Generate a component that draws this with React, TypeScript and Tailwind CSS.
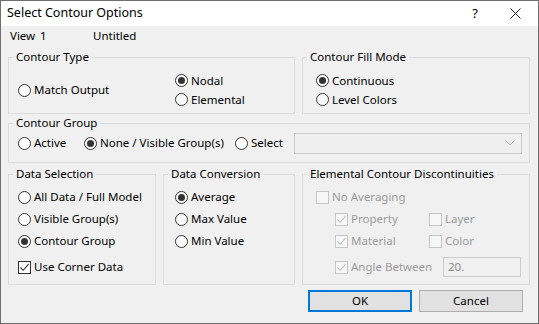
import React from 'react';

const font = { fontFamily: '"Segoe UI", "Noto Sans", "Open Sans", sans-serif' };

function Radio({ label, checked = false, tight = false, className = '' }: { label: string; checked?: boolean; tight?: boolean; className?: string }) {
    return (
        <div className={`flex items-center gap-[3px] ${tight ? 'h-[19px]' : 'h-[22px]'} ${className}`}>
            <div className="h-[13px] w-[13px] rounded-full border border-[#333333] bg-white flex items-center justify-center shrink-0">
                {checked && <div className="h-[7px] w-[7px] rounded-full bg-[#333333]" />}
            </div>
            <span className="text-[11.5px] leading-4 text-black whitespace-nowrap">{label}</span>
        </div>
    );
}

function Check({ label, checked = false, disabled = false, className = '' }: { label: string; checked?: boolean; disabled?: boolean; className?: string }) {
    const stroke = disabled ? '#c2c2c2' : '#333333';
    return (
        <div className={`flex items-center gap-[3px] h-[22px] ${className}`}>
            <div className={`h-[13px] w-[13px] border shrink-0 flex items-center justify-center ${disabled ? 'border-[#c6c6c6] bg-[#f7f7f7]' : 'border-[#333333] bg-white'}`}>
                {checked && (
                    <svg width="11" height="11" viewBox="0 0 11 11">
                        <path d="M1.5 5.5 L4.2 8.3 L9.6 2.2" fill="none" stroke={stroke} strokeWidth="1.1" />
                    </svg>
                )}
            </div>
            <span className={`text-[11.5px] leading-4 whitespace-nowrap ${disabled ? 'text-[#9b9b9b]' : 'text-black'}`}>{label}</span>
        </div>
    );
}

function Group({ title, className = '', children }: { title: string; className?: string; children?: React.ReactNode }) {
    return (
        <fieldset className={`border border-[#dcdcdc] shrink-0 ${className}`}>
            <legend className="ml-[4px] px-[3px] text-[11.5px] leading-4 text-black">{title}</legend>
            {children}
        </fieldset>
    );
}

export default function App() {
    return (
        <div style={font} className="w-[539px] h-[324px] border border-[#6e6e6e] bg-[#f0f0f0] flex flex-col overflow-hidden">
            {/* Title bar */}
            <div className="h-[25px] bg-white flex items-center shrink-0">
                <span className="pl-[6px] text-[12.5px] text-black flex-1">Select Contour Options</span>
                <span className="w-[20px] text-center text-[13px] text-black mr-[25px]">?</span>
                <svg width="11" height="11" viewBox="0 0 11 11" className="mr-[17px]">
                    <path d="M0.5 0.5 L10.5 10.5 M10.5 0.5 L0.5 10.5" stroke="#222" strokeWidth="1" />
                </svg>
            </div>

            <div className="pl-[7px] flex flex-col">
                {/* View row */}
                <div className="h-[20px] flex items-center pl-[2px] text-[11.5px] text-black">
                    <span className="w-[30px]">View</span>
                    <span className="w-[53px]">1</span>
                    <span>Untitled</span>
                </div>

                <div className="mt-[3px] flex gap-[7px]">
                    <Group title="Contour Type" className="w-[287px] h-[65px]">
                        <div className="flex items-center pl-[9px] pt-[6px]">
                            <Radio label="Match Output" className="w-[157px]" />
                            <div className="flex flex-col">
                                <Radio label="Nodal" checked tight />
                                <Radio label="Elemental" tight />
                            </div>
                        </div>
                    </Group>
                    <Group title="Contour Fill Mode" className="w-[228px] h-[65px]">
                        <div className="flex flex-col pl-[13px] pt-[6px]">
                            <Radio label="Continuous" checked tight />
                            <Radio label="Level Colors" tight />
                        </div>
                    </Group>
                </div>

                <Group title="Contour Group" className="mt-[1px] w-[522px] h-[48px]">
                    <div className="flex items-center pl-[9px] pt-[1px]">
                        <Radio label="Active" className="w-[66px]" />
                        <Radio label="None / Visible Group(s)" checked className="w-[151px]" />
                        <Radio label="Select" className="w-[59px]" />
                        <div className="w-[228px] h-[21px] border border-[#cccccc] bg-[#efefef] flex items-center justify-end pr-[6px]">
                            <svg width="10" height="6" viewBox="0 0 10 6">
                                <path d="M0.5 0.5 L5 5 L9.5 0.5" fill="none" stroke="#bdbdbd" strokeWidth="1" />
                            </svg>
                        </div>
                    </div>
                </Group>

                <div className="mt-[3px] flex gap-[7px]">
                    <Group title="Data Selection" className="w-[148px] h-[119px]">
                        <div className="flex flex-col pl-[9px] pt-[4px]">
                            <Radio label="All Data / Full Model" />
                            <Radio label="Visible Group(s)" />
                            <Radio label="Contour Group" checked />
                            <Check label="Use Corner Data" checked className="mt-[4px]" />
                        </div>
                    </Group>
                    <Group title="Data Conversion" className="w-[132px] h-[119px]">
                        <div className="flex flex-col pl-[11px] pt-[4px]">
                            <Radio label="Average" checked />
                            <Radio label="Max Value" />
                            <Radio label="Min Value" />
                        </div>
                    </Group>
                    <Group title="Elemental Contour Discontinuities" className="w-[228px] h-[119px]">
                        <div className="flex flex-col pl-[13px] pt-[4px]">
                            <Check label="No Averaging" disabled />
                            <div className="pl-[19px] flex flex-col">
                                <div className="flex">
                                    <Check label="Property" checked disabled className="w-[94px]" />
                                    <Check label="Layer" disabled />
                                </div>
                                <div className="flex">
                                    <Check label="Material" checked disabled className="w-[94px]" />
                                    <Check label="Color" disabled />
                                </div>
                                <div className="flex items-center mt-[4px] h-[22px]">
                                    <Check label="Angle Between" checked disabled className="w-[108px]" />
                                    <div className="w-[78px] h-[20px] border border-[#cccccc] bg-[#f0f0f0] flex items-center pl-[4px] text-[11.5px] text-[#8a8a8a]">
                                        20.
                                    </div>
                                </div>
                            </div>
                        </div>
                    </Group>
                </div>

                <div className="mt-[5px] ml-[300px] flex gap-[7px]">
                    <button className="w-[104px] h-[22px] border-2 border-[#0078d7] bg-[#e1e1e1] text-[11.5px] text-black">OK</button>
                    <button className="w-[104px] h-[22px] border border-[#adadad] bg-[#e1e1e1] text-[11.5px] text-black">Cancel</button>
                </div>
            </div>
        </div>
    );
}
